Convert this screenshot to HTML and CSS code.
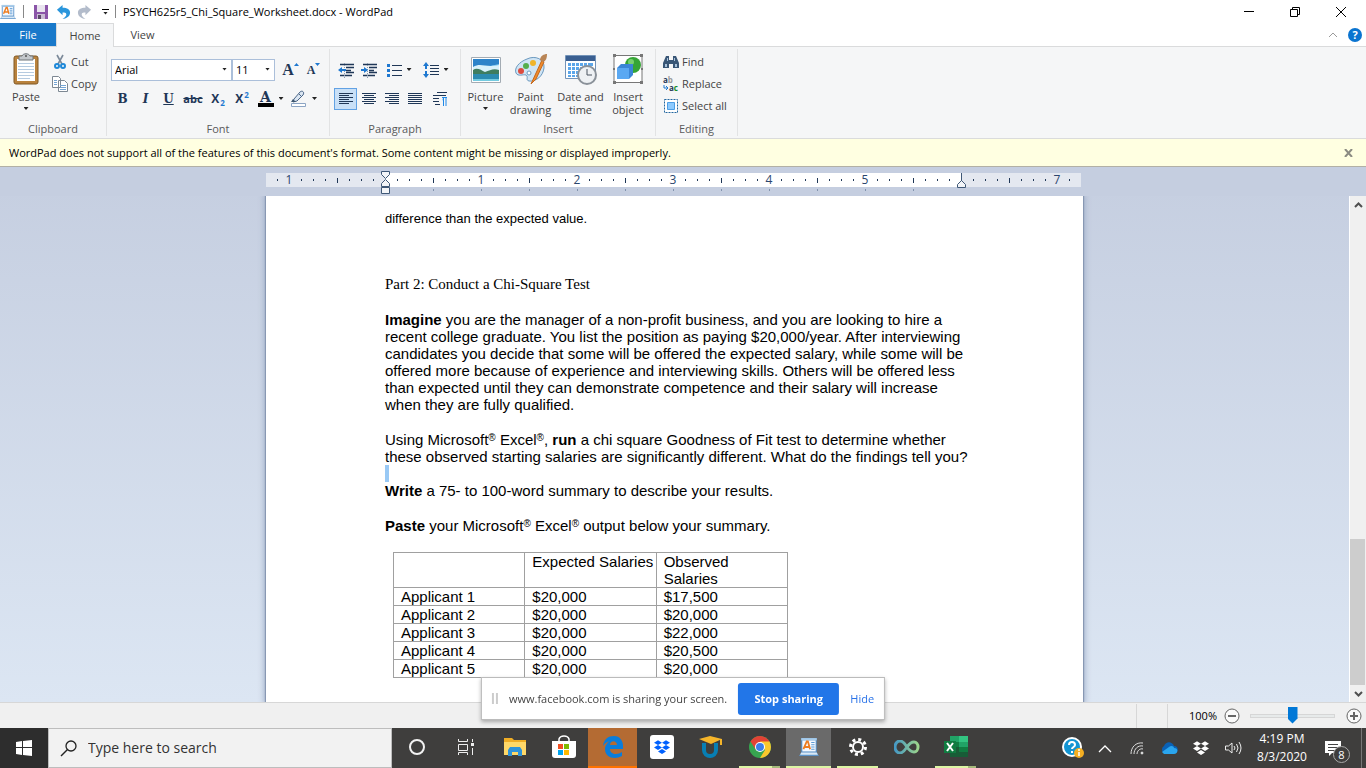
FILE: index.html
```html
<!DOCTYPE html>
<html lang="en">
<head>
    <meta charset="UTF-8">
    <meta name="viewport" content="width=device-width, initial-scale=1.0">
    <title>PSYCH625r5_Chi_Square_Worksheet.docx - WordPad</title>
    <link rel="stylesheet" href="styles.css">
</head>
<body>
    <!-- Shared icons -->
    <svg class="defs" width="0" height="0">
        <symbol id="wordpad" viewBox="0 0 18 18">
            <path d="M2 1h14v13l2 3H0l2-3z" fill="#5b93c8"/>
            <path d="M3 3h12v10H3z" fill="#f4f9ff"/>
            <path d="M2 1h14v2H2z" fill="#a9cdeb"/>
            <path d="M2 14h14l1 2H1z" fill="#d9e8f5"/>
            <path d="M4 11l3-7h1l2 7M5 9h4" fill="none" stroke="#ee7d20" stroke-width="1.6"/>
            <path d="M11 5h3M11 7h3M11 9h3M11 11h3" stroke="#5b9bd5"/>
        </symbol>
        <symbol id="dropbox" viewBox="0 0 20 18">
            <path d="M5 0l5 3-5 3-5-3zM15 0l5 3-5 3-5-3zM5 6l5 3-5 3-5-3zM15 6l5 3-5 3-5-3zM10 11l5 3-5 3-5-3z"/>
        </symbol>
        <symbol id="undo" viewBox="0 0 16 16">
            <path d="M1 6l6-5v3c5 0 8 2 8 5 0 4-3 6-8 7 3-2 4-3 4-5 0-2-2-2-4-2v3z"/>
        </symbol>
    </svg>

    <header class="titlebar">
        <svg class="app-icon" width="16" height="16"><use href="#wordpad"/></svg>
        <span class="divider"></span>
        <button class="quick" aria-label="Save">
            <svg width="14" height="14" viewBox="0 0 14 14"><path d="M0 0h14v14H0z" fill="#8b55a8"/><path d="M3 0h8v7H3z" fill="#e9e4ef"/><path d="M3 9h8v5H3z" fill="#c9bcd3"/><path d="M4 10h3v4H4z" fill="#5b4a68"/></svg>
        </button>
        <button class="quick undo" aria-label="Undo"><svg width="15" height="15"><use href="#undo"/></svg></button>
        <button class="quick redo" aria-label="Redo"><svg width="15" height="15"><use href="#undo"/></svg></button>
        <button class="quick more" aria-label="Customize toolbar"><span class="caret"></span></button>
        <span class="divider"></span>
        <h1>PSYCH625r5_Chi_Square_Worksheet.docx - WordPad</h1>
        <div class="window-buttons">
            <button aria-label="Minimize"><svg width="12" height="12"><path d="M1 5.500h10" stroke="#000"/></svg></button>
            <button aria-label="Restore"><svg width="12" height="12" fill="none" stroke="#000"><path d="M1.500 3.500h7v7h-7zM3.500 3V1.500h7v7H9"/></svg></button>
            <button aria-label="Close"><svg width="12" height="12" stroke="#000"><path d="M1 1l10 10M11 1L1 11"/></svg></button>
        </div>
    </header>

    <nav class="tabs">
        <button class="tab file">File</button>
        <button class="tab active">Home</button>
        <button class="tab">View</button>
        <div class="tab-tools">
            <button aria-label="Minimize the ribbon"><svg width="10" height="6" fill="none" stroke="#9a9a9a"><path d="M1 5l4-4 4 4"/></svg></button>
            <button class="help" aria-label="Help">?</button>
        </div>
    </nav>

    <section class="ribbon">
        <div class="group clipboard">
            <div class="group-body">
                <button class="large">
                    <svg width="28" height="32" viewBox="0 0 28 32"><rect x="2" y="3" width="24" height="28" rx="2" fill="#b9823d" stroke="#805824"/><path d="M5 6h18v22H5z" fill="#fff"/><path d="M6 10.500h16M6 13.500h16M6 16.500h16M6 19.500h16M6 22.500h16M6 25.500h12" stroke="#b6cbe0"/><path d="M7 3h3c1-3 7-3 8 0h3v4H7z" fill="#c3c7cb" stroke="#6e7479"/><circle cx="14" cy="3" r="1" fill="#555"/></svg>
                    <span>Paste</span>
                    <span class="caret"></span>
                </button>
                <div class="small-list">
                    <button class="small">
                        <svg width="16" height="16" viewBox="0 0 16 16" fill="none"><path d="M5 1l5 9M11 1l-5 9" stroke="#7c8a99" stroke-width="1.6"/><circle cx="5" cy="12" r="2" stroke="#1e88d8" stroke-width="2"/><circle cx="11" cy="12" r="2" stroke="#1e88d8" stroke-width="2"/></svg>
                        Cut
                    </button>
                    <button class="small">
                        <svg width="16" height="16" viewBox="0 0 16 16" fill="#fff" stroke="#7d8893"><path d="M.5.5h6l2 2v9h-8zM6.500 4.500h6l3 3v8h-9z"/><path d="M2 4.500h3M2 6.500h3M2 8.500h3M8 9.500h6M8 11.500h6M8 13.500h6" stroke="#75a5d4"/></svg>
                        Copy
                    </button>
                </div>
            </div>
            <h2>Clipboard</h2>
        </div>

        <div class="group font">
            <div class="group-body rows">
                <div class="row">
                    <label class="combo family"><select aria-label="Font family"><option>Arial</option></select></label>
                    <label class="combo size"><select aria-label="Font size"><option>11</option></select></label>
                    <button class="tool grow" aria-label="Grow font">A<svg width="5" height="3"><path d="M0 3l2.500-3L5 3z" fill="#1e78d0"/></svg></button>
                    <button class="tool shrink" aria-label="Shrink font">A<svg width="5" height="3"><path d="M0 0h5L2.500 3z" fill="#1e78d0"/></svg></button>
                </div>
                <div class="row">
                    <button class="tool letter">B</button>
                    <button class="tool letter"><i>I</i></button>
                    <button class="tool letter"><u>U</u></button>
                    <button class="tool letter strike"><s>abc</s></button>
                    <button class="tool script">X<sub>2</sub></button>
                    <button class="tool script">X<sup>2</sup></button>
                    <button class="tool color"><span class="color-a">A</span><span class="caret"></span></button>
                    <button class="tool color" aria-label="Text highlight color">
                        <svg width="17" height="17" viewBox="0 0 17 17"><path d="M4 9l6-7c2-2 5 0 3 3l-6 6-4 1z" fill="#dbe6f2" stroke="#4b6688"/><path d="M9 4l3 3" stroke="#4b6688"/><path d="M1 12l2-3 3 3z" fill="#3d566f"/><path d="M1.500 13.500h14v3h-14z" fill="#fff" stroke="#8ca5c4"/></svg>
                        <span class="caret"></span>
                    </button>
                </div>
            </div>
            <h2>Font</h2>
        </div>

        <div class="group paragraph">
            <div class="group-body rows">
                <div class="row">
                    <button class="tool" aria-label="Decrease indent"><svg width="16" height="16" viewBox="0 0 16 16"><path d="M2 2.500h14M8 5.500h8M8 8.500h5M8 10.500h8M2 13.500h12" stroke="#1f3757" stroke-width="1.5"/><path d="M6.500 1v15" stroke="#8a9bb0" stroke-dasharray="1 1"/><path d="M0 8l4-3v2h4v2H4v2z" fill="#1e78d0"/></svg></button>
                    <button class="tool" aria-label="Increase indent"><svg width="16" height="16" viewBox="0 0 16 16"><path d="M2 2.500h14M8 5.500h8M8 8.500h5M8 10.500h8M2 13.500h12" stroke="#1f3757" stroke-width="1.5"/><path d="M6.500 1v15" stroke="#8a9bb0" stroke-dasharray="1 1"/><path d="M7 8L3 5v2H0v2h3v2z" fill="#1e78d0"/></svg></button>
                    <button class="tool wide" aria-label="Start a list"><svg width="16" height="16" viewBox="0 0 16 16"><path d="M6 3.500h10M6 8.500h10M6 13.500h10" stroke="#1f3757"/><path d="M1 2h3v3H1zM1 7h3v3H1zM1 12h3v3H1z" fill="#1e78d0"/></svg><span class="caret"></span></button>
                    <button class="tool wide" aria-label="Line spacing"><svg width="16" height="16" viewBox="0 0 16 16"><path d="M7 3.500h9M7 6.500h9M7 9.500h9M7 12.500h9" stroke="#1f3757"/><path d="M3 0l3 4H4v3H2V4H0zM3 16l3-4H4V9H2v3H0z" fill="#1e78d0"/></svg><span class="caret"></span></button>
                </div>
                <div class="row">
                    <button class="tool selected" aria-label="Align left"><svg width="14" height="12" stroke="#1f3757"><path d="M0 .5h14M0 2.500h10M0 4.500h14M0 6.500h10M0 8.500h14M0 10.500h10"/></svg></button>
                    <button class="tool" aria-label="Center"><svg width="14" height="12" stroke="#1f3757"><path d="M0 .5h14M2 2.500h10M0 4.500h14M2 6.500h10M0 8.500h14M2 10.500h10"/></svg></button>
                    <button class="tool" aria-label="Align right"><svg width="14" height="12" stroke="#1f3757"><path d="M0 .5h14M4 2.500h10M0 4.500h14M4 6.500h10M0 8.500h14M4 10.500h10"/></svg></button>
                    <button class="tool" aria-label="Justify"><svg width="14" height="12" stroke="#1f3757"><path d="M0 .5h14M0 2.500h14M0 4.500h14M0 6.500h14M0 8.500h14M0 10.500h14"/></svg></button>
                    <button class="tool pilcrow" aria-label="Paragraph"><svg width="14" height="14" viewBox="0 0 14 14"><path d="M4 .5h10M0 3.500h13M0 6.500h6M0 9.500h6M2 12.500h5" stroke="#1f3757"/><path d="M13 5v9M10.500 5v9M14 5.500H9" stroke="#1e88e8"/><path d="M11 5a3 3 0 0 0 0 5z" fill="#1e88e8"/></svg></button>
                </div>
            </div>
            <h2>Paragraph</h2>
        </div>

        <div class="group insert">
            <div class="group-body">
                <button class="large">
                    <svg width="32" height="32" viewBox="0 0 32 32"><path d="M1.500 4.500h29v25h-29z" fill="#fff" stroke="#a3abb3"/><path d="M3 6h26v22H3z" fill="#79c5ef"/><path d="M3 6h26v5L3 17z" fill="#2d83c9"/><path d="M3 14c8-5 12 1 26-2v7H3z" fill="#d9f1fb"/><path d="M3 17c4-3 8 0 12 2 5-2 9-4 14-2v4H3z" fill="#3f7d5f"/><path d="M3 21h26v7H3z" fill="#2c8bb0"/><path d="M3 26h26v2H3z" fill="#74cbe0"/></svg>
                    <span>Picture</span>
                    <span class="caret"></span>
                </button>
                <button class="large">
                    <svg width="32" height="32" viewBox="0 0 32 32"><path d="M12 6c8-4 18 0 17 9-1 8-8 14-15 13-4-1 0-4-3-6-3-1-8 2-10-2C-1 15 4 9 12 6z" fill="#cfe4f4" stroke="#6b99bf"/><circle cx="6" cy="18" r="3" fill="#dd4b3e"/><circle cx="11" cy="13" r="3" fill="#54ae4c"/><circle cx="18" cy="10" r="3" fill="#f0b429"/><circle cx="14" cy="20" r="2" fill="#fff" stroke="#6b99bf"/><path d="M27 7L16 31l5-5 8-17z" fill="#f08c2c" stroke="#c4661a"/><path d="M25 7c0-4 4-6 7-6 0 4-1 7-4 8z" fill="#b98556"/></svg>
                    <span>Paint<br>drawing</span>
                </button>
                <button class="large">
                    <svg width="32" height="32" viewBox="0 0 32 32"><path d="M.5 2.500h30v23H.5z" fill="#fff" stroke="#7393b8"/><path d="M1 3h29v5H1z" fill="#3a5f91"/><path d="M3 10h25v14H3z" fill="#5ba6ea"/><path d="M3 13.500h25M3 17.500h25M3 21.500h25M6.500 10v14M10.500 10v14M14.500 10v14M18.500 10v14M22.500 10v14" stroke="#fff"/><circle cx="22" cy="22" r="9" fill="#eef1f4" stroke="#8a9199" stroke-width="2"/><path d="M22 16v6h5" fill="none" stroke="#4b5560"/></svg>
                    <span>Date and<br>time</span>
                </button>
                <button class="large">
                    <svg width="32" height="32" viewBox="0 0 32 32"><path d="M2 2.500h28v27H2z" fill="#fff" stroke="#777"/><circle cx="21" cy="12" r="8" fill="#35a535"/><circle cx="19" cy="9" r="3" fill="#78d06f"/><path d="M5 15l4-4h12v11l-4 4H5z" fill="#3b86d6"/><path d="M5 15h12v11H5z" fill="#5aa8f2"/><path d="M1 1h3v3H1zM28 1h3v3h-3zM1 28h3v3H1zM28 28h3v3h-3zM1 15h2v2H1zM29 15h2v2h-2z" fill="#777"/></svg>
                    <span>Insert<br>object</span>
                </button>
            </div>
            <h2>Insert</h2>
        </div>

        <div class="group editing">
            <div class="group-body small-list">
                <button class="small">
                    <svg width="16" height="16" viewBox="0 0 16 16"><path d="M3 2h3v4h4V2h3l3 7v5h-6v-4H6v4H0V9z" fill="#395676"/><path d="M2 10h2v3H2zM12 10h2v3h-2zM4 4h1v3H4zM11 4h1v3h-1z" fill="#a9c2da"/></svg>
                    Find
                </button>
                <button class="small">
                    <svg class="replace" width="16" height="16" viewBox="0 0 16 16"><text x="0" y="7">a<tspan fill="#999">b</tspan></text><text x="6" y="15">a<tspan fill="#168a2d">c</tspan></text><path d="M1 9v3h4M3 10l2 2-2 2" fill="none" stroke="#1e78d0"/></svg>
                    Replace
                </button>
                <button class="small">
                    <svg width="16" height="16" viewBox="0 0 16 16"><path d="M1.500 1.500h13v13h-13z" fill="#fff" stroke="#23679f" stroke-dasharray="2 1"/><path d="M4.500 4.500h7v7h-7z" fill="#8ccaff" stroke="#4c9ee5"/></svg>
                    Select all
                </button>
            </div>
            <h2>Editing</h2>
        </div>
    </section>

    <div class="notice">
        <p>WordPad does not support all of the features of this document's format. Some content might be missing or displayed improperly.</p>
        <button aria-label="Close message"><svg width="9" height="8" stroke="#8b8b82" stroke-width="2"><path d="M1 0l7 8M8 0L1 8"/></svg></button>
    </div>

    <main class="workspace">
        <div class="ruler">
            <svg width="817" height="29" viewBox="0 1 817 29">
                <pattern id="inch" x="23" y="0" width="96" height="14" patternUnits="userSpaceOnUse">
                    <path d="M12 6h1v2h-1zM24 6h1v2h-1zM36 6h1v2h-1zM48 5h1v5h-1zM60 6h1v2h-1zM72 6h1v2h-1zM84 6h1v2h-1z" fill="#1f3757"/>
                </pattern>
                <path d="M0 7h815v14H0z" fill="#e4e8f0"/>
                <path d="M119 7h576v14H119z" fill="#fff"/>
                <g transform="translate(0 7)"><path d="M11 0h800v14H11z" fill="url(#inch)"/></g>
                <path d="M167 23h1v2h-1zM215 23h1v2h-1zM263 23h1v2h-1zM311 23h1v2h-1zM359 23h1v2h-1zM407 23h1v2h-1zM455 23h1v2h-1zM503 23h1v2h-1zM551 23h1v2h-1zM599 23h1v2h-1zM647 23h1v2h-1z" fill="#8293ad"/>
                <g class="ruler-numbers">
                    <text x="23" y="18">1</text>
                    <text x="215" y="18">1</text>
                    <text x="311" y="18">2</text>
                    <text x="407" y="18">3</text>
                    <text x="503" y="18">4</text>
                    <text x="599" y="18">5</text>
                    <text x="791" y="18">7</text>
                </g>
                <g fill="#f3f5f8" stroke="#3f5877">
                    <path d="M115.500 5.500h8v3l-4 4-4-4zM115.500 20.500v-3l4-4 4 4v3zM115.500 21.500h8v6h-8zM695.500 7v8M691.500 21.500v-3l4-4 4 4v3z"/>
                </g>
            </svg>
        </div>

        <div class="viewport">
            <div class="canvas">
                <article class="page">
                    <p class="note">difference than the expected value.</p>
                    <h3>Part 2: Conduct a Chi-Square Test</h3>
                    <p><strong>Imagine</strong> you are the manager of a non-profit business, and you are looking to hire a recent college graduate. You list the position as paying $20,000/year. After interviewing candidates you decide that some will be offered the expected salary, while some will be offered more because of experience and interviewing skills. Others will be offered less than expected until they can demonstrate competence and their salary will increase when they are fully qualified.</p>
                    <p class="tight">Using Microsoft<sup>®</sup> Excel<sup>®</sup>, <strong>run</strong> a chi square Goodness of Fit test to determine whether these observed starting salaries are significantly different. What do the findings tell you?</p>
                    <p class="tight selection"><span></span></p>
                    <p><strong>Write</strong> a 75- to 100-word summary to describe your results.</p>
                    <p><strong>Paste</strong> your Microsoft<sup>®</sup> Excel<sup>®</sup> output below your summary.</p>
                    <table>
                        <thead>
                            <tr><th></th><th>Expected Salaries</th><th>Observed Salaries</th></tr>
                        </thead>
                        <tbody>
                            <tr><td>Applicant 1</td><td>$20,000</td><td>$17,500</td></tr>
                            <tr><td>Applicant 2</td><td>$20,000</td><td>$20,000</td></tr>
                            <tr><td>Applicant 3</td><td>$20,000</td><td>$22,000</td></tr>
                            <tr><td>Applicant 4</td><td>$20,000</td><td>$20,500</td></tr>
                            <tr><td>Applicant 5</td><td>$20,000</td><td>$20,000</td></tr>
                        </tbody>
                    </table>
                </article>
            </div>
            <div class="scrollbar">
                <button aria-label="Scroll up"><svg width="9" height="6" fill="none" stroke="#505050" stroke-width="2"><path d="M1 5l3.500-3.500L8 5"/></svg></button>
                <div class="track"><div class="thumb"></div></div>
                <button aria-label="Scroll down"><svg width="9" height="6" fill="none" stroke="#505050" stroke-width="2"><path d="M1 1l3.500 3.500L8 1"/></svg></button>
            </div>
        </div>
    </main>

    <footer class="statusbar">
        <span class="cell"></span>
        <label for="zoom">100%</label>
        <button aria-label="Zoom out"><svg width="16" height="16" fill="#fafafa" stroke="#666"><circle cx="8" cy="8" r="7"/><path d="M4 8h8" stroke-width="2"/></svg></button>
        <input type="range" id="zoom" min="0" max="100" value="50">
        <button aria-label="Zoom in"><svg width="16" height="16" fill="#fafafa" stroke="#666"><circle cx="8" cy="8" r="7"/><path d="M4 8h8M8 4v8" stroke-width="2"/></svg></button>
    </footer>

    <div class="taskbar">
        <button class="start" aria-label="Start"><svg width="16" height="16" viewBox="0 0 16 16" fill="#fff"><path d="M0 2l6-1v6H0zM7 1l9-1v7H7zM0 8h6v7l-6-1zM7 8h9v8l-9-1z"/></svg></button>
        <div class="search">
            <svg width="17" height="17" fill="none" stroke="#222"><circle cx="11" cy="6" r="5" stroke-width="1.300"/><path d="M7.500 9.500L1 16" stroke-width="1.500"/></svg>
            <input type="text" placeholder="Type here to search" aria-label="Search">
        </div>
        <div class="apps">
            <button aria-label="Cortana"><svg width="18" height="18" fill="none" stroke="#f2f2f2" stroke-width="2"><circle cx="9" cy="9" r="7"/></svg></button>
            <button aria-label="Task view"><svg width="18" height="16" viewBox="0 0 18 16" fill="none" stroke="#eee"><path d="M1.500 0v2.500h9V0M1.500 5.500h9v6h-9zM1.500 16v-2.500h9V16M15.500 0v3M15.500 9v7"/><path d="M14 4h3v3h-3z" fill="#eee" stroke="none"/></svg></button>
            <button aria-label="File Explorer"><svg width="22" height="20" viewBox="0 0 22 20"><path d="M0 1h8l2 2h12v15H0z" fill="#f0ad25"/><path d="M0 5h22v13H0z" fill="#ffd868"/><path d="M4 19v-6l2-3h10l2 3v6h-4v-4H8v4z" fill="#2f93d9"/></svg></button>
            <button aria-label="Microsoft Store"><svg width="24" height="24" viewBox="0 0 24 24"><path d="M7 7V4q1-3 5-3t5 3v3" fill="none" stroke="#fff" stroke-width="1.500"/><path d="M0 6h24v14q0 3-3 3H3q-3 0-3-3z" fill="#fff"/><path d="M6 9h5v5H6z" fill="#f25022"/><path d="M12 9h5v5h-5z" fill="#7fba00"/><path d="M6 15h5v5H6z" fill="#00a4ef"/><path d="M12 15h5v5h-5z" fill="#ffb900"/></svg></button>
            <button class="alert" aria-label="Microsoft Edge"><svg width="22" height="22" viewBox="0 0 22 22"><path d="M1 10C2 3 6 0 12 0c6 0 9 5 9 10v3H8c0 6 8 6 12 3v4C13 24 3 22 3 13c0-4 3-7 5-8-3 1-5 2-7 5zM8 9h7c0-5-7-5-7 0z" fill="#0a7ddb"/></svg></button>
            <button aria-label="Dropbox"><svg width="24" height="24" viewBox="0 0 24 24"><rect width="24" height="24" rx="3" fill="#fff"/><use href="#dropbox" x="4" y="5" width="16" height="15" fill="#0061fe"/></svg></button>
            <button aria-label="University"><svg width="24" height="24" viewBox="0 0 24 24"><path d="M5 8v7c0 8 12 8 12 0V8" fill="none" stroke="#087fb4" stroke-width="4"/><path d="M0 4l11-3 12 3-11 5z" fill="#f5b52a"/><path d="M22 4v6" stroke="#f5b52a" stroke-width="2"/></svg></button>
            <button class="running stacked" aria-label="Google Chrome"><svg width="22" height="22" viewBox="0 0 22 22"><circle cx="11" cy="11" r="11" fill="#37a550"/><path d="M1.500 5.500A11 11 0 0 1 20.500 5.500L11 11l-4 3z" fill="#e24235"/><path d="M20.500 5.500A11 11 0 0 1 11 22l5-8-5-8.500z" fill="#fbc72d"/><circle cx="11" cy="11" r="5" fill="#fff"/><circle cx="11" cy="11" r="4" fill="#3e7ee8"/></svg></button>
            <button class="running current" aria-label="WordPad"><svg width="20" height="20"><use href="#wordpad"/></svg></button>
            <button class="running" aria-label="Settings"><svg width="18" height="18" viewBox="0 0 18 18" fill="none" stroke="#fff"><circle cx="9" cy="9" r="5" stroke-width="2"/><circle cx="9" cy="9" r="7.500" stroke-width="3" stroke-dasharray="3 2.890"/></svg></button>
            <button aria-label="Infinity"><svg width="26" height="14" viewBox="0 0 26 14"><linearGradient id="loop"><stop offset="0" stop-color="#4699c4"/><stop offset="1" stop-color="#9bd48c"/></linearGradient><path d="M13 7C10 2 8 1 6 1a5 6 0 0 0 0 12c3 0 5-3 7-6s5-5 7-5a4 5 0 0 1 0 10c-3 0-5-2-7-5z" fill="none" stroke="url(#loop)" stroke-width="3"/></svg></button>
            <button class="running stacked" aria-label="Excel"><svg width="24" height="22" viewBox="0 0 24 22"><path d="M6 0h9v21H6z" fill="#21a366"/><path d="M15 0h9v11h-9z" fill="#33c481"/><path d="M6 6h9v5H6z" fill="#107c41"/><path d="M15 6h9v5h-9z" fill="#21a366"/><path d="M6 11h18v10H6z" fill="#185c37"/><path d="M15 11h9v5h-9z" fill="#107c41"/><path d="M0 5h12v12H0z" fill="#107c41"/><path d="M3 7l6 8M9 7l-6 8" stroke="#fff" stroke-width="2"/></svg></button>
        </div>
        <div class="tray">
            <button aria-label="Support"><svg width="24" height="22" viewBox="0 0 24 22"><circle cx="11" cy="10" r="9" fill="#1394d2" stroke="#fff" stroke-width="2"/><path d="M8 8c0-4 6-4 6 0 0 2-3 2-3 4M11 14v2" fill="none" stroke="#fff" stroke-width="2"/><circle cx="18" cy="16" r="5" fill="#f4ae22"/><path d="M18 15v4M18 12v2" stroke="#fff" stroke-width="1.500"/></svg></button>
            <button aria-label="Show hidden icons"><svg width="14" height="9" fill="none" stroke="#fff" stroke-width="1.300"><path d="M1 8l6-6 6 6"/></svg></button>
            <button aria-label="Network"><svg width="14" height="14" viewBox="0 0 14 14" fill="none" stroke="#ddd"><path d="M1 13C1 6 6 1 13 2M4 13c0-5 4-9 9-8M7 13c0-3 3-6 6-5" /><circle cx="12" cy="12" r="1" fill="#fff"/></svg></button>
            <button aria-label="OneDrive"><svg width="18" height="12" viewBox="0 0 18 12"><path d="M4 11a4 4 0 0 1 0-7c2-5 8-5 10 0 5 0 5 7 0 7z" fill="#0a61b5"/><path d="M2 10l7-5c2-2 5-1 5 1 5 0 4 6 0 6H4z" fill="#2aa5ee"/></svg></button>
            <button aria-label="Dropbox"><svg width="16" height="15" fill="#fff"><use href="#dropbox"/></svg></button>
            <button aria-label="Volume"><svg width="17" height="14" viewBox="0 0 17 14" fill="none" stroke="#eee"><path d="M.5 5h3L7 2v10L3.500 9h-3zM9 5q2 2 0 4M11.500 3q3 4 0 8M14 1q4 6 0 12"/></svg></button>
            <div class="clock"><time>4:19 PM</time><time>8/3/2020</time></div>
            <button class="actions" aria-label="8 notifications"><svg width="16" height="16" viewBox="0 0 16 16"><path d="M0 1h16v12H7l-3 3v-3H0z" fill="#fff"/><path d="M3 4.500h10M3 7.500h10M3 10.500h7" stroke="#444"/></svg><span class="badge">8</span></button>
        </div>
    </div>

    <div class="sharing">
        <span class="grip"></span>
        <p>www.facebook.com is sharing your screen.</p>
        <button>Stop sharing</button>
        <a href="#">Hide</a>
    </div>
</body>
</html>
```

FILE: styles.css
```css
* {
    box-sizing: border-box;
}
body {
    margin: 0;
    height: 100vh;
    overflow: hidden;
    display: flex;
    flex-direction: column;
    font-family: "Open Sans", sans-serif;
    font-size: 11px;
    line-height: 16px;
    color: #000;
    background: #fff;
}
h1, h2, h3, p {
    margin: 0;
    font-size: inherit;
    font-weight: normal;
}
button {
    display: flex;
    align-items: center;
    justify-content: center;
    padding: 0;
    border: none;
    background: none;
    font: inherit;
    color: inherit;
}
svg {
    flex: none;
}
.defs {
    position: absolute;
}
.caret {
    width: 5px;
    height: 3px;
    flex: none;
    background: #222;
    clip-path: polygon(0 0, 100% 0, 50% 100%);
}

/* Title bar */
.titlebar {
    display: flex;
    align-items: center;
    height: 23px;
}
.divider {
    width: 1px;
    height: 13px;
    background: #888;
}
.app-icon {
    margin-right: 7px;
}
.quick {
    width: 22px;
    height: 22px;
}
.titlebar .divider + .quick {
    margin-left: 6px;
}
.undo {
    fill: #2a96dc;
}
.redo {
    fill: #b3bccb;
    transform: scaleX(-1);
}
.more {
    width: 19px;
    flex-direction: column;
    gap: 2px;
}
.more::before {
    content: "";
    width: 7px;
    height: 1px;
    background: #000;
}
h1 {
    margin-left: 7px;
}
.window-buttons {
    display: flex;
    margin-left: auto;
}
.window-buttons button {
    width: 46px;
    height: 22px;
}
.window-buttons button:last-child {
    margin-right: 2px;
}

/* Tabs */
.tabs {
    display: flex;
    height: 24px;
    border-bottom: 1px solid #dadbdc;
}
.tab {
    width: 57px;
    height: 23px;
    color: #444;
}
.tab.file {
    width: 56px;
    background: #1979ca;
    color: #fff;
}
.tab.active {
    width: 58px;
    height: 24px;
    border: 1px solid #dadbdc;
    border-bottom: none;
    background: #f5f6f7;
}
.tab-tools {
    display: flex;
    align-items: center;
    gap: 10px;
    margin-left: auto;
    padding-right: 4px;
}
.help {
    width: 14px;
    height: 14px;
    border-radius: 50%;
    background: #0a74d0;
    color: #fff;
    font-weight: bold;
}

/* Ribbon */
.ribbon {
    display: flex;
    height: 92px;
    padding: 2px 0;
    background: #f5f6f7;
    border-bottom: 1px solid #dadbdc;
}
.group {
    display: flex;
    flex-direction: column;
    border-right: 1px solid #e2e3e4;
    color: #444;
}
.group-body {
    display: flex;
    flex: 1;
    min-height: 0;
}
.group h2 {
    text-align: center;
    color: #5a5a5a;
    line-height: 14px;
}
.clipboard {
    width: 107px;
}
.font {
    width: 223px;
}
.paragraph {
    width: 131px;
}
.insert {
    width: 195px;
}
.editing {
    width: 82px;
}
.large {
    flex-direction: column;
    justify-content: flex-start;
    flex: none;
    padding-top: 4px;
    line-height: 13px;
}
.large svg {
    margin-bottom: 5px;
}
.large .caret {
    margin-top: 4px;
}
.clipboard .large {
    width: 52px;
}
.insert .large {
    width: 49px;
}
.insert .large:nth-child(2) {
    width: 41px;
}
.insert .large:nth-child(3) {
    width: 59px;
}
.insert .large:nth-child(4) {
    width: 36px;
}
.small-list {
    display: flex;
    flex-direction: column;
    padding-top: 2px;
}
.small {
    justify-content: flex-start;
    gap: 3px;
    height: 22px;
    flex: none;
    white-space: nowrap;
}
.editing .small {
    padding-left: 7px;
}
.rows {
    flex-direction: column;
    gap: 6px;
    padding: 9px 4px 0;
}
.row {
    display: flex;
    align-items: center;
    height: 23px;
}
.combo {
    position: relative;
    height: 22px;
}
.combo::after {
    content: "";
    position: absolute;
    right: 5px;
    top: 9px;
    width: 5px;
    height: 3px;
    background: #222;
    clip-path: polygon(0 0, 100% 0, 50% 100%);
}
.combo select {
    appearance: none;
    width: 100%;
    height: 22px;
    padding: 0 3px;
    border: 1px solid #abbfda;
    border-radius: 0;
    background: #fff;
    font: inherit;
    color: #000;
}
.family {
    width: 121px;
}
.size {
    width: 43px;
    margin-right: 4px;
}
.tool {
    width: 23px;
    height: 22px;
    color: #1f3757;
}
.grow, .shrink {
    font: bold 16px/18px "Liberation Serif", serif;
}
.grow svg, .shrink svg {
    align-self: flex-start;
    margin-top: 4px;
}
.shrink {
    font-size: 12px;
}
.letter {
    font: bold 12px/16px "DejaVu Serif", serif;
}
.strike {
    width: 26px;
    font: bold 11px/16px "Open Sans", sans-serif;
}
.script {
    width: 24px;
    gap: 1px;
    font-size: 12px;
    font-weight: bold;
}
.script sub, .script sup {
    font-size: 8px;
    line-height: 8px;
    color: #1e78d0;
}
.script sub {
    align-self: flex-end;
    margin-bottom: 3px;
}
.script sup {
    align-self: flex-start;
    margin-top: 3px;
}
.color {
    width: 33px;
    gap: 5px;
}
.color-a {
    width: 16px;
    border-bottom: 4px solid #000;
    font: bold 14px/12px "DejaVu Serif", serif;
}
.paragraph .wide {
    width: 37px;
    gap: 5px;
}
.pilcrow {
    width: 27px;
}
.selected {
    border: 1px solid #62a2e4;
    background: #c9e0f7;
}
.replace {
    overflow: visible;
    font: bold 8px "Open Sans", sans-serif;
    fill: #1f3757;
}

/* Format message */
.notice {
    display: flex;
    align-items: center;
    justify-content: space-between;
    height: 28px;
    padding: 0 13px 0 9px;
    border-bottom: 1px solid #b2b0a5;
    background: #ffffe1;
}

/* Document area */
.workspace {
    display: flex;
    flex-direction: column;
    flex: 1;
    min-height: 0;
    background: linear-gradient(#c5cee0, #dce6f3);
}
.ruler {
    display: flex;
    justify-content: center;
    flex: none;
    height: 29px;
    padding-right: 17px;
    background: #c5cee0;
}
.ruler-numbers {
    font-size: 12px;
    fill: #2b466d;
    text-anchor: middle;
}
.viewport {
    display: flex;
    flex: 1;
    min-height: 0;
}
.canvas {
    display: flex;
    justify-content: center;
    flex: 1;
    overflow: hidden;
}
.page {
    width: 817px;
    padding: 14px 106px 0 119px;
    background: #fff;
    box-shadow: 0 0 1px 1px #8898b3, 0 0 6px 2px #a3b1ca;
    font-family: "Liberation Sans", Arial, sans-serif;
    font-size: 15px;
    line-height: 17px;
}
.page p {
    margin-bottom: 18px;
}
.page .note {
    margin-bottom: 49px;
    font-size: 13px;
}
.page h3 {
    margin-bottom: 18px;
    font-family: "Liberation Serif", "Times New Roman", serif;
}
.page .tight {
    margin-bottom: 0;
}
.page sup {
    font-size: 10px;
    line-height: 0;
    vertical-align: 4px;
}
.selection span {
    display: block;
    width: 4px;
    height: 17px;
    background: #99c9f5;
}
.page table {
    width: 395px;
    margin-left: 8px;
    table-layout: fixed;
    border-collapse: collapse;
}
.page th, .page td {
    padding: 0 0 0 7px;
    border: 1px solid #a0a0a0;
    text-align: left;
    vertical-align: top;
    font-weight: normal;
}
.scrollbar {
    display: flex;
    flex-direction: column;
    width: 17px;
    border-left: 1px solid #fff;
    background: #f0f0f0;
}
.scrollbar button {
    height: 17px;
}
.track {
    display: flex;
    flex: 1;
    align-items: flex-end;
}
.thumb {
    width: 15px;
    height: 31%;
    background: #cdcdcd;
}

/* Status bar */
.statusbar {
    display: flex;
    align-items: center;
    justify-content: flex-end;
    height: 26px;
    padding-right: 4px;
    border-top: 1px solid #d7d7d7;
    background: #f0f0f0;
}
.cell {
    width: 32px;
    height: 24px;
    margin-right: 21px;
    border: 1px solid #d7d7d7;
    border-width: 0 1px;
}
.statusbar label {
    margin-right: 7px;
}
.statusbar input {
    appearance: none;
    width: 85px;
    height: 18px;
    margin: 0 11px 0 10px;
    background: none;
}
.statusbar input::-webkit-slider-runnable-track {
    height: 4px;
    border: 1px solid #d6d6d6;
    background: #e7eaea;
}
.statusbar input::-webkit-slider-thumb {
    appearance: none;
    width: 10px;
    height: 17px;
    margin-top: -8px;
    background: #0078d7;
    clip-path: polygon(0 0, 100% 0, 100% 70%, 50% 100%, 0 70%);
}

/* Taskbar */
.taskbar {
    display: flex;
    height: 40px;
    background: #3f3e3d;
    color: #fff;
}
.start {
    width: 48px;
    background: #2d2d2d;
}
.search {
    display: flex;
    align-items: center;
    width: 344px;
    padding-left: 11px;
    gap: 11px;
    border: 1px solid #bdbdbd;
    background: #f2f2f2;
}
.search input {
    flex: 1;
    min-width: 0;
    padding: 0;
    border: none;
    background: none;
    font: 14px/20px "Open Sans", sans-serif;
}
.search input::placeholder {
    color: #333;
}
.apps {
    display: flex;
}
.apps button {
    width: 49px;
    border-bottom: 2px solid transparent;
}
.apps .alert {
    background: #b46b33;
    border-color: #ff7200;
}
.apps .running {
    width: 41px;
    margin: 0 4px;
    border-color: #dcf5a4;
}
.apps .stacked {
    border-image: linear-gradient(90deg, #dcf5a4 80%, #a5b97b 80%) 1;
    border-width: 0 0 2px;
    border-style: solid;
}
.apps .current {
    width: 45px;
    margin: 0 2px;
    background: #6a6a6a;
}
.tray {
    display: flex;
    margin-left: auto;
    padding-right: 4px;
}
.tray button {
    width: 32px;
}
.clock {
    display: flex;
    flex-direction: column;
    align-items: center;
    justify-content: center;
    width: 66px;
    font-size: 12px;
    line-height: 18px;
}
.tray .actions {
    position: relative;
    width: 47px;
    padding-right: 10px;
    border-right: 1px solid #777;
}
.badge {
    position: absolute;
    left: 18px;
    top: 18px;
    width: 17px;
    height: 17px;
    border: 1px solid #aaa;
    border-radius: 50%;
    background: #3f3e3d;
    line-height: 15px;
}

/* Screen sharing bar */
.sharing {
    position: fixed;
    left: 50%;
    bottom: 48px;
    transform: translateX(-50%);
    display: flex;
    align-items: center;
    height: 43px;
    padding: 0 10px;
    border: 1px solid #bbb;
    background: #fff;
    box-shadow: 0 2px 4px rgba(0, 0, 0, 0.3);
    color: #444;
    white-space: nowrap;
}
.grip {
    width: 6px;
    height: 11px;
    margin-right: 11px;
    border: 2px solid #ccc;
    border-width: 0 2px;
}
.sharing button {
    width: 101px;
    height: 32px;
    margin: 0 11px;
    border-radius: 3px;
    background: #2276e8;
    color: #fff;
    font-weight: bold;
}
.sharing a {
    color: #2a73e8;
    text-decoration: none;
}
```
